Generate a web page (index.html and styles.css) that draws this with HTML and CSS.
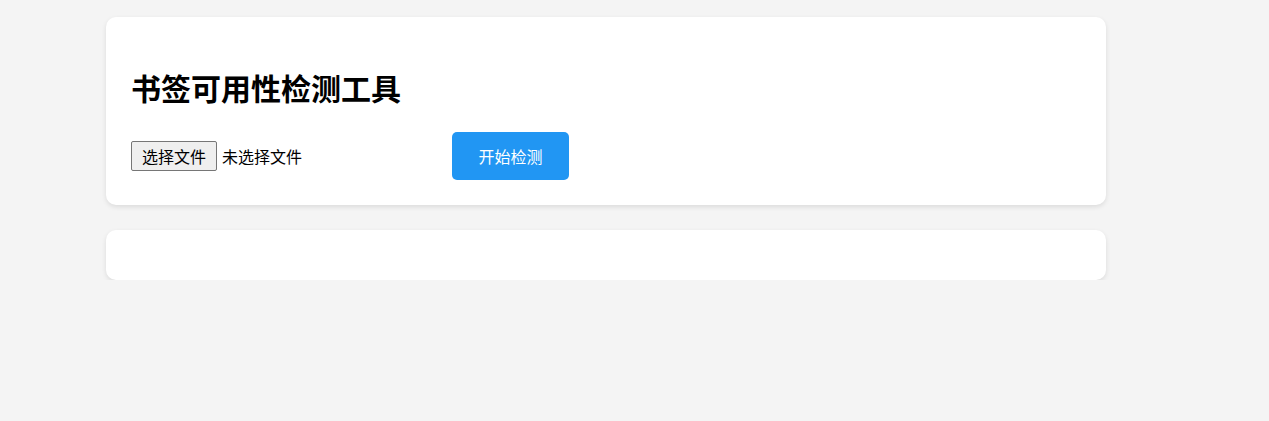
FILE: index.html
```html
<!DOCTYPE html>
<html lang="zh-CN">
<head>
<meta charset="utf-8">
<title>书签可用性检测工具</title>
<link rel="stylesheet" href="styles.css">
</head>
<body>
<div class="container">
  <section class="card">
    <h1 class="title">书签可用性检测工具</h1>
    <div class="controls">
      <label class="file-picker">
        <input class="file-input" type="file" accept=".html">
        <span class="file-btn">选择文件</span>
        <span class="file-name">未选择文件</span>
      </label>
      <button class="start-btn" type="button">开始检测</button>
    </div>
  </section>
  <section class="card results"></section>
</div>
</body>
</html>
```
FILE: styles.css
```css
html, body {
  margin: 0;
  padding: 0;
}
body {
  background: #f4f4f4;
  font-family: "Noto Sans CJK SC", "Noto Sans", sans-serif;
  color: #000;
}
.container {
  width: 1000px;
  margin: 17px 0 0 106px;
  display: flex;
  flex-direction: column;
  gap: 25px;
}
.card {
  background: #fff;
  border-radius: 10px;
  box-shadow: 0 2px 5px rgba(0, 0, 0, 0.1);
  padding: 25px;
}
.results {
  height: 50px;
  box-sizing: border-box;
}
.title {
  font-size: 30px;
  font-weight: 700;
  line-height: 41px;
  margin: 25px 0 24px;
  letter-spacing: 0;
}
.controls {
  display: flex;
  align-items: center;
}
.file-picker {
  width: 321px;
  display: flex;
  align-items: center;
  gap: 5px;
  font-size: 16px;
  cursor: pointer;
}
.file-input {
  display: none;
}
.file-btn {
  box-sizing: border-box;
  height: 30px;
  width: 86px;
  display: flex;
  align-items: center;
  justify-content: center;
  background: #efefef;
  border: 1px solid #767676;
  border-radius: 2px;
  font-size: 16px;
  color: #000;
}
.file-name {
  font-size: 16px;
}
.start-btn {
  box-sizing: border-box;
  width: 117px;
  height: 48px;
  border: none;
  border-radius: 5px;
  background: #2196f3;
  color: #fff;
  font-family: inherit;
  font-size: 16px;
  cursor: pointer;
  padding: 0;
}
```
